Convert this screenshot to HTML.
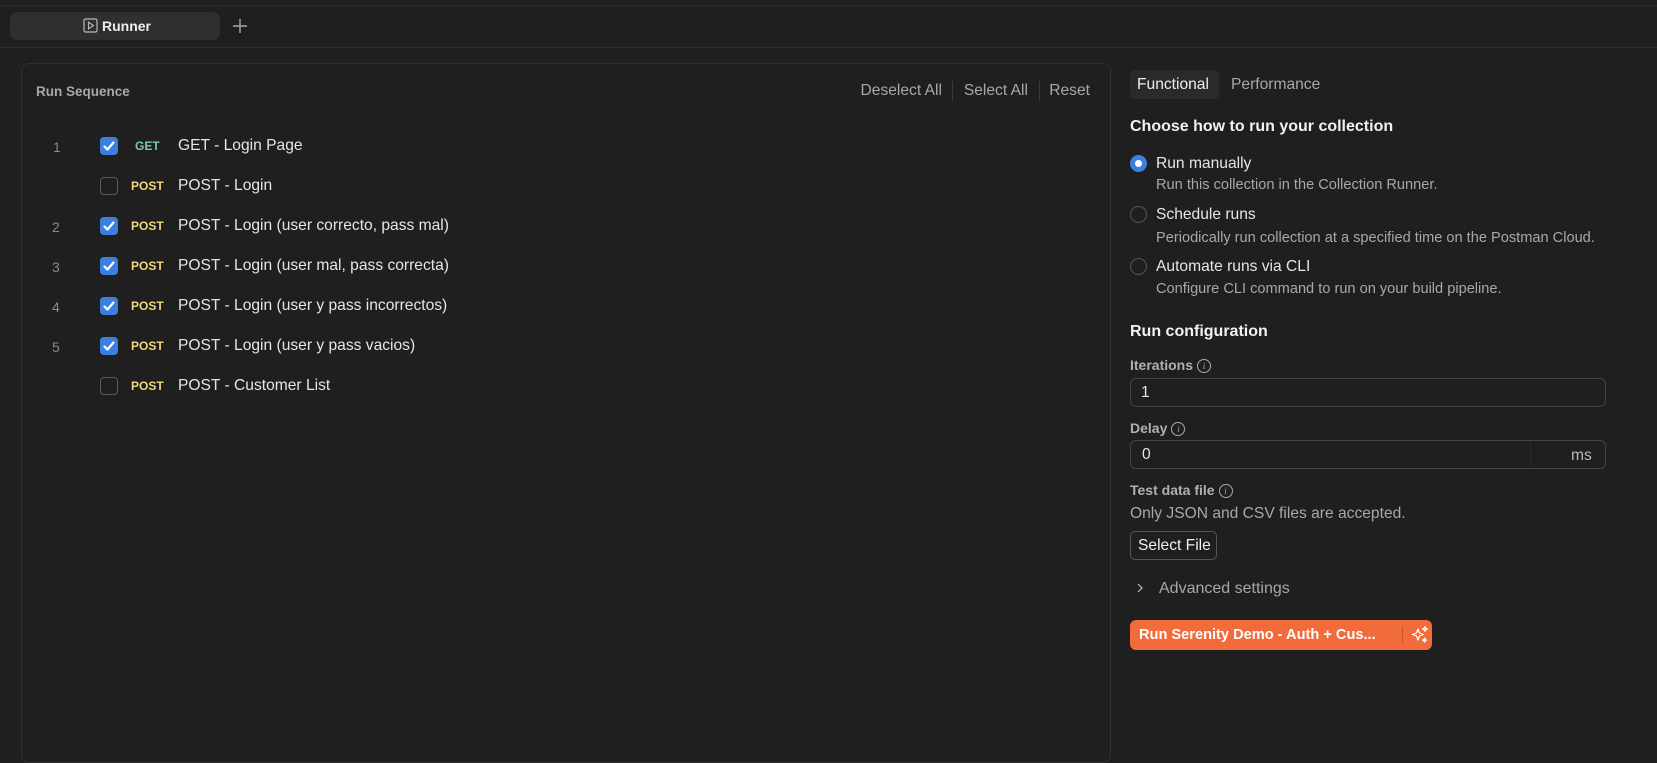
<!DOCTYPE html>
<html><head><meta charset="utf-8"><style>
*{box-sizing:border-box;margin:0;padding:0}
body{width:1657px;height:698px;background:#1f1f1f;font-family:"Liberation Sans",sans-serif;color:#e6e6e6;position:relative;overflow:hidden;font-size:15.6px}
.a{position:absolute;white-space:nowrap}
.topline{position:absolute;left:0;right:0;top:5px;height:1px;background:#2c2c2c}
.tabline{position:absolute;left:0;right:0;top:47px;height:1px;background:#2e2e2e}
.tab{position:absolute;left:10px;top:12px;width:210px;height:28px;background:#2f2f2f;border-radius:7px}
.panel{position:absolute;left:21px;top:63px;width:1090px;height:700px;border:1px solid #2f2f2f;border-radius:8px;background:#1f1f1f}
.num{color:#8a8a8a;font-size:14px}
.cb{position:absolute;width:18px;height:18px;border-radius:4px}
.cb.on{background:#3d7fe0}
.cb.off{border:1.5px solid #5a5a5a}
.m{font-weight:bold;font-size:12px}
.get{color:#7fc8a0}.post{color:#f2d47a}
.sep{position:absolute;width:1px;height:20px;background:#3a3a3a;top:81px}
.radio{position:absolute;left:1130px;width:17px;height:17px;border-radius:50%;border:1.5px solid #555}
.desc{color:#a8a8a8;font-size:14.6px}
.lbl{color:#b0b0b0;font-weight:bold;font-size:14px}
.inp{position:absolute;left:1130px;width:476px;height:29px;border:1px solid #444;border-radius:6px}
.info{display:inline-block;width:14px;height:14px;border:1.3px solid #aaa;border-radius:50%;font-size:9px;text-align:center;line-height:12px;color:#aaa;font-style:italic;vertical-align:1px;margin-left:4px;font-weight:normal;font-family:"Liberation Serif",serif}
</style></head><body>
<div class="topline"></div>
<div class="tab"></div>
<svg class="a" style="left:83px;top:18px" width="15" height="15" viewBox="0 0 15 15"><rect x="1" y="1" width="13" height="13" rx="1.5" fill="none" stroke="#bbb" stroke-width="1.2"/><path d="M5.5 4.2v6.6l5-3.3z" fill="none" stroke="#bbb" stroke-width="1.1"/></svg>
<div class="a" style="left:102px;top:18px;font-size:14px;font-weight:bold;color:#eee">Runner</div>
<svg class="a" style="left:231px;top:17px" width="18" height="18"><path d="M9 2v14M2 9h14" stroke="#aaa" stroke-width="1.4"/></svg>
<div class="tabline"></div>

<div class="panel"></div>
<div class="a" style="left:36px;top:84px;font-size:13.5px;font-weight:bold;color:#a8a8a8">Run Sequence</div>
<div class="a" style="right:715px;top:82px;color:#a8a8a8">Deselect All</div>
<div class="sep" style="left:952px"></div>
<div class="a" style="right:629px;top:82px;color:#a8a8a8">Select All</div>
<div class="sep" style="left:1039px"></div>
<div class="a" style="right:567px;top:82px;color:#a8a8a8">Reset</div>

<div class="a num" style="left:53px;top:139px">1</div>
<div class="cb on" style="left:100px;top:137px"></div>
<div class="a m get" style="left:135px;top:139px">GET</div>
<div class="a" style="left:178px;top:137px">GET - Login Page</div>

<div class="cb off" style="left:100px;top:177px"></div>
<div class="a m post" style="left:131px;top:179px">POST</div>
<div class="a" style="left:178px;top:177px">POST - Login</div>

<div class="a num" style="left:52px;top:219px">2</div>
<div class="cb on" style="left:100px;top:217px"></div>
<div class="a m post" style="left:131px;top:219px">POST</div>
<div class="a" style="left:178px;top:217px">POST - Login (user correcto, pass mal)</div>

<div class="a num" style="left:52px;top:259px">3</div>
<div class="cb on" style="left:100px;top:257px"></div>
<div class="a m post" style="left:131px;top:259px">POST</div>
<div class="a" style="left:178px;top:257px">POST - Login (user mal, pass correcta)</div>

<div class="a num" style="left:52px;top:299px">4</div>
<div class="cb on" style="left:100px;top:297px"></div>
<div class="a m post" style="left:131px;top:299px">POST</div>
<div class="a" style="left:178px;top:297px">POST - Login (user y pass incorrectos)</div>

<div class="a num" style="left:52px;top:339px">5</div>
<div class="cb on" style="left:100px;top:337px"></div>
<div class="a m post" style="left:131px;top:339px">POST</div>
<div class="a" style="left:178px;top:337px">POST - Login (user y pass vacios)</div>

<div class="cb off" style="left:100px;top:377px"></div>
<div class="a m post" style="left:131px;top:379px">POST</div>
<div class="a" style="left:178px;top:377px">POST - Customer List</div>

<svg class="a" style="left:100px;top:137px" width="18" height="258">
<g fill="none" stroke="#fff" stroke-width="2.2" stroke-linecap="round" stroke-linejoin="round">
<path d="M4.5 9.5l3 3 6-7"/><path d="M4.5 89.5l3 3 6-7"/><path d="M4.5 129.5l3 3 6-7"/><path d="M4.5 169.5l3 3 6-7"/><path d="M4.5 209.5l3 3 6-7"/></g></svg>

<div class="a" style="left:1130px;top:70px;width:89px;height:29px;background:#2a2a2a;border-radius:5px"></div>
<div class="a" style="left:1137px;top:76px;color:#eee">Functional</div>
<div class="a" style="left:1231px;top:76px;color:#a8a8a8">Performance</div>
<div class="a" style="left:1130px;top:118px;font-size:16px;font-weight:bold;color:#f2f2f2">Choose how to run your collection</div>

<div class="radio" style="top:155px;border:none;background:#3d7fe0"></div>
<div class="a" style="left:1135px;top:160px;width:7px;height:7px;border-radius:50%;background:#fff"></div>
<div class="a" style="left:1156px;top:155px">Run manually</div>
<div class="a desc" style="left:1156px;top:177px">Run this collection in the Collection Runner.</div>
<div class="radio" style="top:206px"></div>
<div class="a" style="left:1156px;top:206px">Schedule runs</div>
<div class="a desc" style="left:1156px;top:230px">Periodically run collection at a specified time on the Postman Cloud.</div>
<div class="radio" style="top:258px"></div>
<div class="a" style="left:1156px;top:258px">Automate runs via CLI</div>
<div class="a desc" style="left:1156px;top:281px">Configure CLI command to run on your build pipeline.</div>

<div class="a" style="left:1130px;top:323px;font-size:16px;font-weight:bold;color:#f2f2f2">Run configuration</div>
<div class="a lbl" style="left:1130px;top:357px">Iterations<span class="info">i</span></div>
<div class="inp" style="top:378px"></div>
<div class="a" style="left:1141px;top:384px">1</div>
<div class="a lbl" style="left:1130px;top:420px">Delay<span class="info">i</span></div>
<div class="inp" style="top:440px"></div>
<div class="a" style="left:1530px;top:441px;width:1px;height:27px;background:#2a2a2a"></div>
<div class="a" style="left:1142px;top:446px">0</div>
<div class="a" style="left:1571px;top:447px;color:#bbb">ms</div>
<div class="a lbl" style="left:1130px;top:482px">Test data file<span class="info">i</span></div>
<div class="a" style="left:1130px;top:505px;color:#a8a8a8">Only JSON and CSV files are accepted.</div>
<div class="a" style="left:1130px;top:531px;width:87px;height:29px;border:1px solid #555;border-radius:5px"></div>
<div class="a" style="left:1138px;top:537px;color:#f0f0f0">Select File</div>
<svg class="a" style="left:1135px;top:581px" width="10" height="14"><path d="M3 3l4 4-4 4" fill="none" stroke="#aaa" stroke-width="1.3"/></svg>
<div class="a" style="left:1159px;top:580px;color:#a8a8a8;font-size:16px">Advanced settings</div>

<div class="a" style="left:1130px;top:620px;width:302px;height:30px;background:#f26b3a;border-radius:6px"></div>
<div class="a" style="left:1139px;top:627px;color:#fff;font-weight:bold;font-size:14.6px">Run Serenity Demo - Auth + Cus...</div>
<div class="a" style="left:1402px;top:626px;width:1px;height:18px;background:#c9562d"></div>
<svg class="a" style="left:1409px;top:624px" width="22" height="22" viewBox="0 0 22 22"><g fill="none" stroke="#fff" stroke-width="1.2" stroke-linejoin="round"><path d="M9 5l1.5 4 4 1.5-4 1.5L9 16l-1.5-4-4-1.5 4-1.5z"/><path d="M16 2.5l.7 1.8 1.8.7-1.8.7-.7 1.8-.7-1.8-1.8-.7 1.8-.7z"/><path d="M15.5 14l.6 1.5 1.5.6-1.5.6-.6 1.5-.6-1.5-1.5-.6 1.5-.6z"/></g></svg>
</body></html>
